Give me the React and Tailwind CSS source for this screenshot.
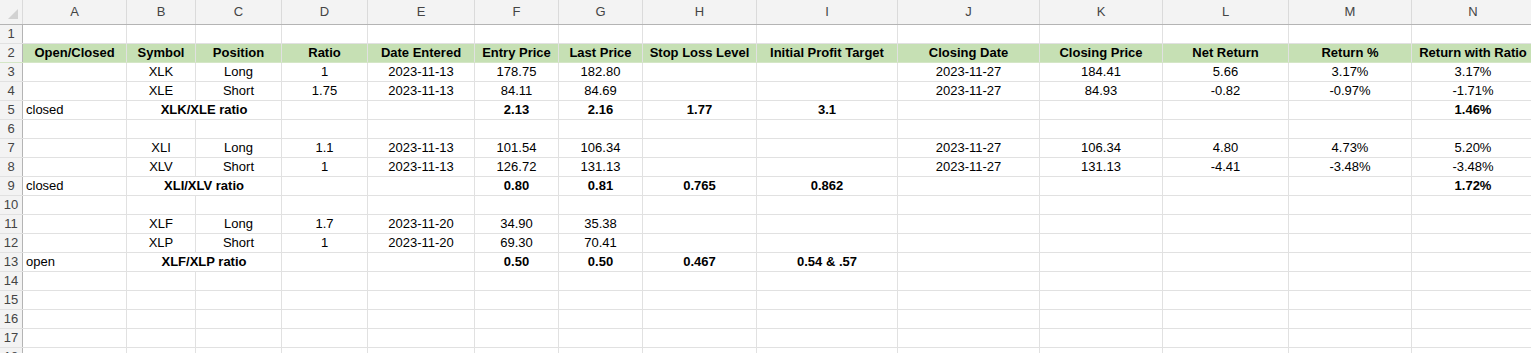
import React from "react";

const cols = [
    { key: "A", w: "w-[104px]", align: "justify-start pl-[3px]" },
    { key: "B", w: "w-[69px]" },
    { key: "C", w: "w-[86px]" },
    { key: "D", w: "w-[86px]" },
    { key: "E", w: "w-[107px]" },
    { key: "F", w: "w-[84px]" },
    { key: "G", w: "w-[84px]" },
    { key: "H", w: "w-[114px]" },
    { key: "I", w: "w-[141px]" },
    { key: "J", w: "w-[142px]" },
    { key: "K", w: "w-[123px]" },
    { key: "L", w: "w-[126px]" },
    { key: "M", w: "w-[123px]" },
    { key: "N", w: "w-[123px]" },
];

const headers = [
    "Open/Closed", "Symbol", "Position", "Ratio", "Date Entered", "Entry Price", "Last Price",
    "Stop Loss Level", "Initial Profit Target", "Closing Date", "Closing Price", "Net Return",
    "Return %", "Return with Ratio",
];

// data rows, index = row number
const legs = {
    3: ["", "XLK", "Long", "1", "2023-11-13", "178.75", "182.80", "", "", "2023-11-27", "184.41", "5.66", "3.17%", "3.17%"],
    4: ["", "XLE", "Short", "1.75", "2023-11-13", "84.11", "84.69", "", "", "2023-11-27", "84.93", "-0.82", "-0.97%", "-1.71%"],
    7: ["", "XLI", "Long", "1.1", "2023-11-13", "101.54", "106.34", "", "", "2023-11-27", "106.34", "4.80", "4.73%", "5.20%"],
    8: ["", "XLV", "Short", "1", "2023-11-13", "126.72", "131.13", "", "", "2023-11-27", "131.13", "-4.41", "-3.48%", "-3.48%"],
    11: ["", "XLF", "Long", "1.7", "2023-11-20", "34.90", "35.38", "", "", "", "", "", "", ""],
    12: ["", "XLP", "Short", "1", "2023-11-20", "69.30", "70.41", "", "", "", "", "", "", ""],
};

const pairs = {
    5: { status: "closed", name: "XLK/XLE ratio", vals: ["", "", "2.13", "2.16", "1.77", "3.1", "", "", "", "", "1.46%"] },
    9: { status: "closed", name: "XLI/XLV ratio", vals: ["", "", "0.80", "0.81", "0.765", "0.862", "", "", "", "", "1.72%"] },
    13: { status: "open", name: "XLF/XLP ratio", vals: ["", "", "0.50", "0.50", "0.467", "0.54 & .57", "", "", "", "", ""] },
};

const cellBase = "shrink-0 h-full flex items-center overflow-hidden whitespace-nowrap border-r border-[#e1e1e1]";

const RowHead = ({ n }) => (
    <div className="shrink-0 w-[23px] h-full flex items-center justify-center bg-[#f3f3f3] border-r border-[#b4b4b4] text-[#444] text-[13px]">
        {n}
    </div>
);

const Row = ({ n, children, green }) => (
    <div className={`flex h-[19px] border-b ${green ? "border-[#d4e6c6]" : "border-[#e1e1e1]"}`}>
        <RowHead n={n} />
        {children}
    </div>
);

const App = () => {
    const rows = [];
    for (let n = 1; n <= 18; n++) {
        if (n === 2) {
            rows.push(
                <Row key={n} n={n} green>
                    {cols.map((c, i) => (
                        <div key={c.key} className={`${cellBase} ${c.w} justify-center bg-[#c6e0b4] border-[#c6e0b4] font-bold text-black`}>
                            {headers[i]}
                        </div>
                    ))}
                </Row>
            );
        } else if (legs[n]) {
            rows.push(
                <Row key={n} n={n}>
                    {cols.map((c, i) => (
                        <div key={c.key} className={`${cellBase} ${c.w} ${c.align || "justify-center"}`}>
                            {legs[n][i]}
                        </div>
                    ))}
                </Row>
            );
        } else if (pairs[n]) {
            const p = pairs[n];
            rows.push(
                <Row key={n} n={n}>
                    <div className={`${cellBase} w-[104px] justify-start pl-[3px]`}>{p.status}</div>
                    <div className={`${cellBase} w-[155px] justify-center font-bold`}>{p.name}</div>
                    {cols.slice(3).map((c, i) => (
                        <div key={c.key} className={`${cellBase} ${c.w} justify-center font-bold`}>
                            {p.vals[i]}
                        </div>
                    ))}
                </Row>
            );
        } else {
            rows.push(
                <Row key={n} n={n}>
                    {cols.map((c) => (
                        <div key={c.key} className={`${cellBase} ${c.w}`} />
                    ))}
                </Row>
            );
        }
    }

    return (
        <div className="w-[1531px] h-[353px] overflow-hidden bg-white text-[13px] text-black font-['Liberation_Sans',Arial,sans-serif]">
            {/* column letters */}
            <div className="flex h-[25px] bg-[#f3f3f3] border-b border-[#b4b4b4]">
                <div className="shrink-0 w-[23px] h-full relative border-r border-[#dadada]">
                    <svg className="absolute left-[8px] top-[9px]" width="10" height="10" viewBox="0 0 10 10">
                        <polygon points="10,0 10,10 0,10" fill="#d2d2d2" />
                    </svg>
                </div>
                {cols.map((c) => (
                    <div key={c.key} className={`shrink-0 h-full flex items-center justify-center border-r border-[#dadada] text-[#444] ${c.w}`}>
                        {c.key}
                    </div>
                ))}
            </div>
            {rows}
        </div>
    );
};

export default App;
